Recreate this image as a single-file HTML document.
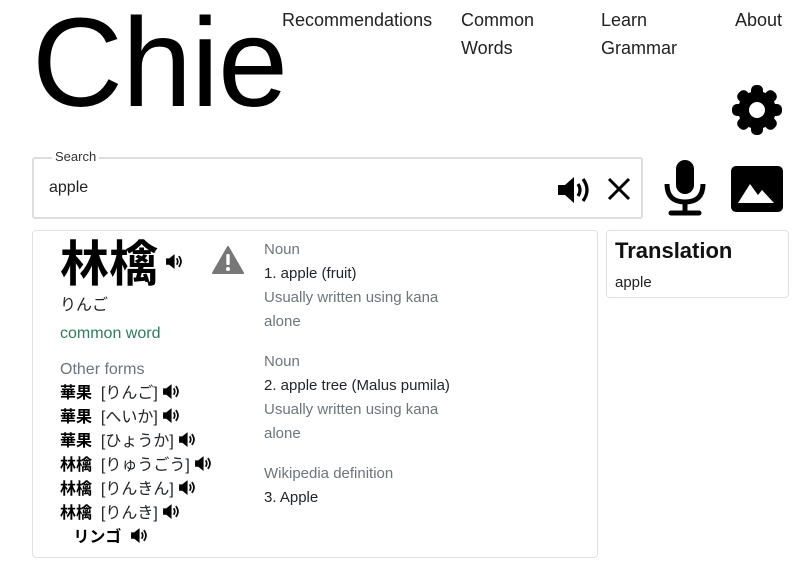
<!DOCTYPE html>
<html><head><meta charset="utf-8"><style>
body{margin:0;width:809px;height:568px;background:#fff;font-family:"Liberation Sans","Noto Sans CJK JP",sans-serif;color:#212529;position:relative;overflow:hidden}
.a{position:absolute}
.logo{left:32px;top:-10px;font-size:126px;color:#000;letter-spacing:-1px}
.nav{font-size:18px;color:#222;line-height:28px}
.fs{left:32px;top:157px;width:611px;height:62px;border:2px solid #ddd;border-radius:3px;box-sizing:border-box}
.card{border:1px solid #dee2e6;border-radius:4px;box-sizing:border-box}
.t{font-size:15px;line-height:24px}
.g{color:#6c757d}
.row{font-size:16px;height:24px;line-height:24px}
.row b{color:#000;font-weight:bold}
svg.sp{width:17px;height:17px;vertical-align:-2px}
</style></head><body>
<div class="a logo">Chie</div>
<div class="a nav" style="left:282px;top:6px">Recommendations</div>
<div class="a nav" style="left:461px;top:6px">Common<br>Words</div>
<div class="a nav" style="left:601px;top:6px">Learn<br>Grammar</div>
<div class="a nav" style="left:735px;top:6px">About</div>
<svg class="a" style="left:731px;top:84px" width="52" height="52" viewBox="0 0 52 52"><g fill="#000"><circle cx="26" cy="26" r="19"/><g id="th"><rect x="20" y="1" width="12" height="14" rx="5"/><rect x="20" y="37" width="12" height="14" rx="5"/></g><use href="#th" transform="rotate(45 26 26)"/><use href="#th" transform="rotate(90 26 26)"/><use href="#th" transform="rotate(135 26 26)"/></g><circle cx="26" cy="26" r="8" fill="#fff"/></svg>
<div class="a fs"></div>
<div class="a" style="left:52px;top:149px;background:#fff;padding:0 3px;font-size:13px;color:#333">Search</div>
<div class="a" style="left:49px;top:179px;font-size:16px;color:#222">apple</div>
<svg class="a" style="left:556px;top:174px" width="38" height="32" viewBox="0 0 38 32"><path d="M2 11h7l9-8v26l-9-8H2z" fill="#000"/><path d="M22 10q4 6 0 12M27 5q8 11 0 22" stroke="#000" stroke-width="3.2" fill="none"/></svg>
<svg class="a" style="left:606px;top:176px" width="26" height="26" viewBox="0 0 26 26"><path d="M3 3L23 23M23 3L3 23" stroke="#000" stroke-width="3"/></svg>
<svg class="a" style="left:661px;top:160px" width="48" height="58" viewBox="0 0 48 58"><rect x="15" y="0" width="18" height="34" rx="9" fill="#000"/><path d="M6 24q0 18 18 18q18 0 18-18" stroke="#000" stroke-width="5" fill="none"/><path d="M24 42v10M10 53h28" stroke="#000" stroke-width="5" stroke-linecap="round"/></svg>
<svg class="a" style="left:731px;top:166px" width="52" height="46" viewBox="0 0 52 46"><rect width="52" height="46" rx="5" fill="#000"/><path d="M7 37l12-19 8 11 4-5 12 13z" fill="#fff"/></svg>
<div class="a card" style="left:32px;top:230px;width:566px;height:328px"></div>
<div class="a" style="left:60px;top:234px;font-size:49px;font-weight:bold;color:#000;line-height:62px">林檎</div>
<svg class="a sp" style="left:165px;top:253px" viewBox="0 0 16 16"><path d="M1 5h3l5-4v14l-5-4H1z" fill="#000"/><path d="M11 5q2 3 0 6M13 3q4 5 0 10" stroke="#000" stroke-width="1.6" fill="none"/></svg>
<svg class="a" style="left:212px;top:245px" width="32" height="30" viewBox="0 0 32 30"><path d="M16 2L31 28H1z" fill="#777" stroke="#777" stroke-width="2" stroke-linejoin="round"/><rect x="14.3" y="9" width="3.4" height="11" rx="1" fill="#fff"/><circle cx="16" cy="24" r="2" fill="#fff"/></svg>
<div class="a t" style="left:60px;top:294px;color:#222;font-size:16px">りんご</div>
<div class="a t" style="left:60px;top:322px;color:#2e7d5b;font-size:16px">common word</div>
<div class="a t g" style="left:60px;top:358px;font-size:16px">Other forms</div>
<div class="a" style="left:60px;top:382px">
<div class="row"><b>華果</b>&nbsp;&nbsp;[りんご] <svg class="sp" viewBox="0 0 16 16"><path d="M1 5h3l5-4v14l-5-4H1z" fill="#000"/><path d="M11 5q2 3 0 6M13 3q4 5 0 10" stroke="#000" stroke-width="1.6" fill="none"/></svg></div>
<div class="row"><b>華果</b>&nbsp;&nbsp;[へいか] <svg class="sp" viewBox="0 0 16 16"><path d="M1 5h3l5-4v14l-5-4H1z" fill="#000"/><path d="M11 5q2 3 0 6M13 3q4 5 0 10" stroke="#000" stroke-width="1.6" fill="none"/></svg></div>
<div class="row"><b>華果</b>&nbsp;&nbsp;[ひょうか] <svg class="sp" viewBox="0 0 16 16"><path d="M1 5h3l5-4v14l-5-4H1z" fill="#000"/><path d="M11 5q2 3 0 6M13 3q4 5 0 10" stroke="#000" stroke-width="1.6" fill="none"/></svg></div>
<div class="row"><b>林檎</b>&nbsp;&nbsp;[りゅうごう] <svg class="sp" viewBox="0 0 16 16"><path d="M1 5h3l5-4v14l-5-4H1z" fill="#000"/><path d="M11 5q2 3 0 6M13 3q4 5 0 10" stroke="#000" stroke-width="1.6" fill="none"/></svg></div>
<div class="row"><b>林檎</b>&nbsp;&nbsp;[りんきん] <svg class="sp" viewBox="0 0 16 16"><path d="M1 5h3l5-4v14l-5-4H1z" fill="#000"/><path d="M11 5q2 3 0 6M13 3q4 5 0 10" stroke="#000" stroke-width="1.6" fill="none"/></svg></div>
<div class="row"><b>林檎</b>&nbsp;&nbsp;[りんき] <svg class="sp" viewBox="0 0 16 16"><path d="M1 5h3l5-4v14l-5-4H1z" fill="#000"/><path d="M11 5q2 3 0 6M13 3q4 5 0 10" stroke="#000" stroke-width="1.6" fill="none"/></svg></div>
<div class="row">&nbsp;&nbsp;&nbsp;<b>リンゴ</b>&nbsp;&nbsp;<svg class="sp" viewBox="0 0 16 16"><path d="M1 5h3l5-4v14l-5-4H1z" fill="#000"/><path d="M11 5q2 3 0 6M13 3q4 5 0 10" stroke="#000" stroke-width="1.6" fill="none"/></svg></div>
</div>
<div class="a t" style="left:264px;top:238px;width:200px">
<div class="g">Noun</div><div>1. apple (fruit)</div><div class="g">Usually written using kana alone</div>
<div class="g" style="margin-top:16px">Noun</div><div>2. apple tree (Malus pumila)</div><div class="g">Usually written using kana alone</div>
<div class="g" style="margin-top:16px">Wikipedia definition</div><div>3. Apple</div>
</div>
<div class="a card" style="left:606px;top:230px;width:183px;height:68px"></div>
<div class="a" style="left:615px;top:238px;font-size:22px;font-weight:bold;color:#111">Translation</div>
<div class="a t" style="left:615px;top:271px;color:#222">apple</div>
</body></html>
